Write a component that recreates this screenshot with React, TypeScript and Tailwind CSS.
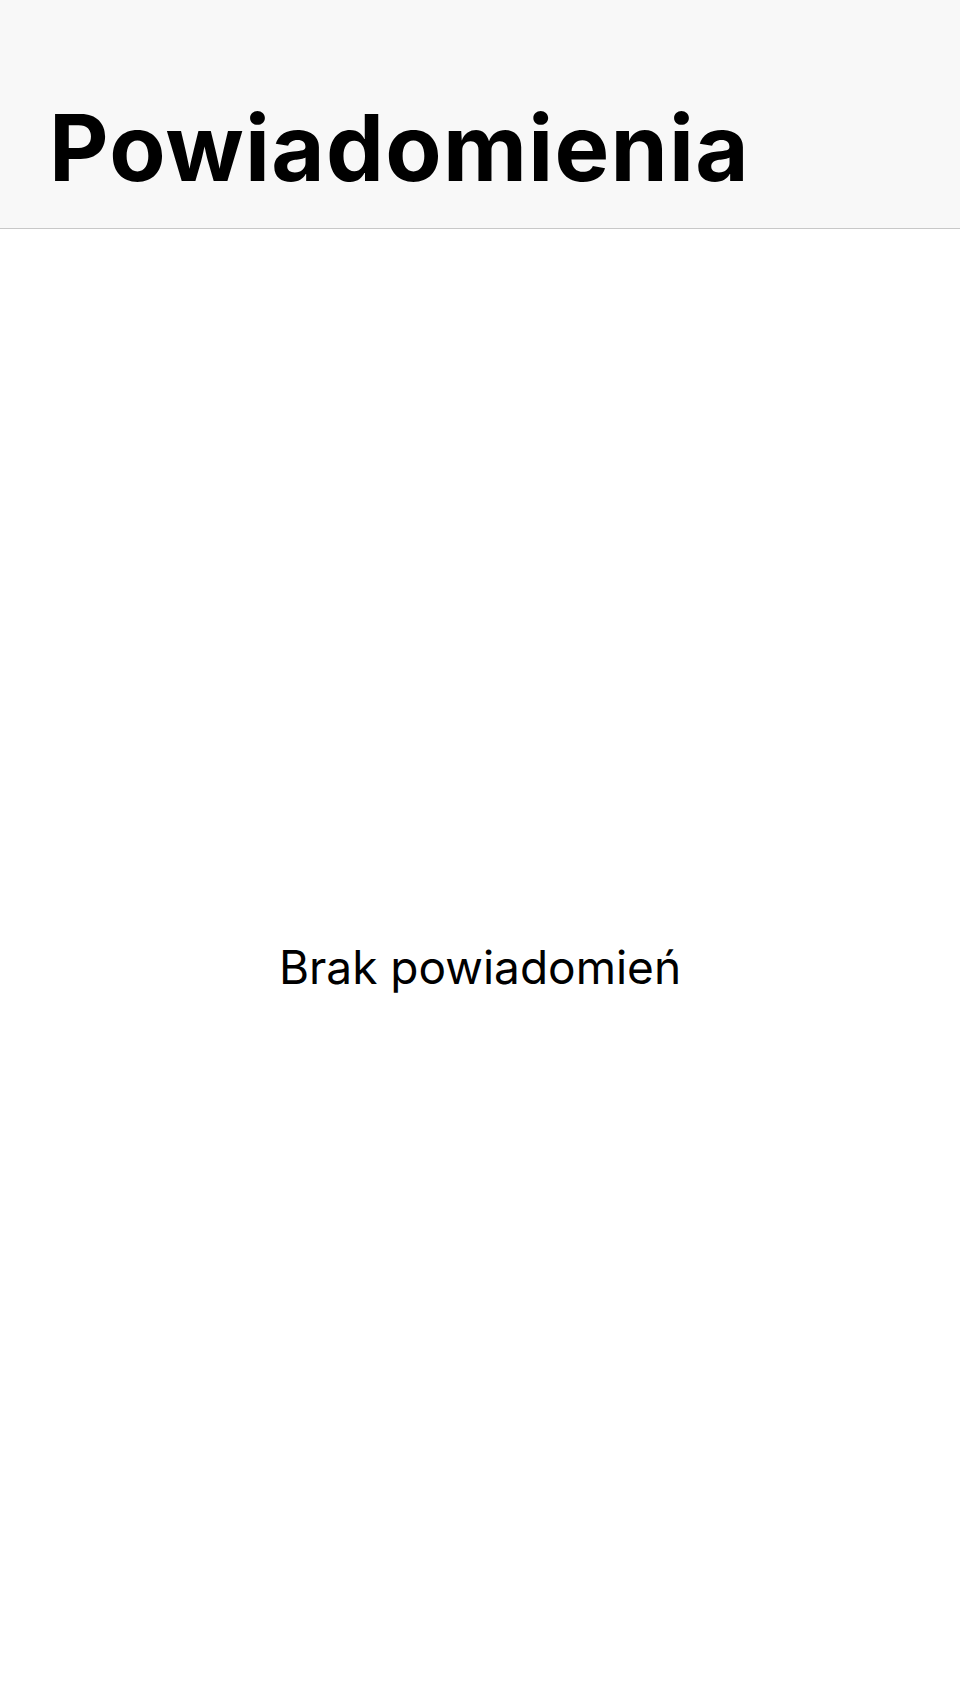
const NotificationsPage = () => {
    return (
        <div className="flex flex-col h-[1704px] bg-white text-black font-['Inter','Liberation_Sans',sans-serif]">
            {/* HEADER */}
            <div className="h-[229px] shrink-0 bg-[#f8f8f8] border-b border-[#c8c8c8] flex items-end px-[49px] pb-[34px]">
                <h1 className="text-[92px] leading-none font-bold tracking-[0.014em]">Powiadomienia</h1>
            </div>
            {/* EMPTY STATE */}
            <div className="flex-1 flex items-center justify-center">
                <p className="text-[46px] leading-none">Brak powiadomień</p>
            </div>
        </div>
    );
};

export default function App() {
    return <NotificationsPage />;
}
